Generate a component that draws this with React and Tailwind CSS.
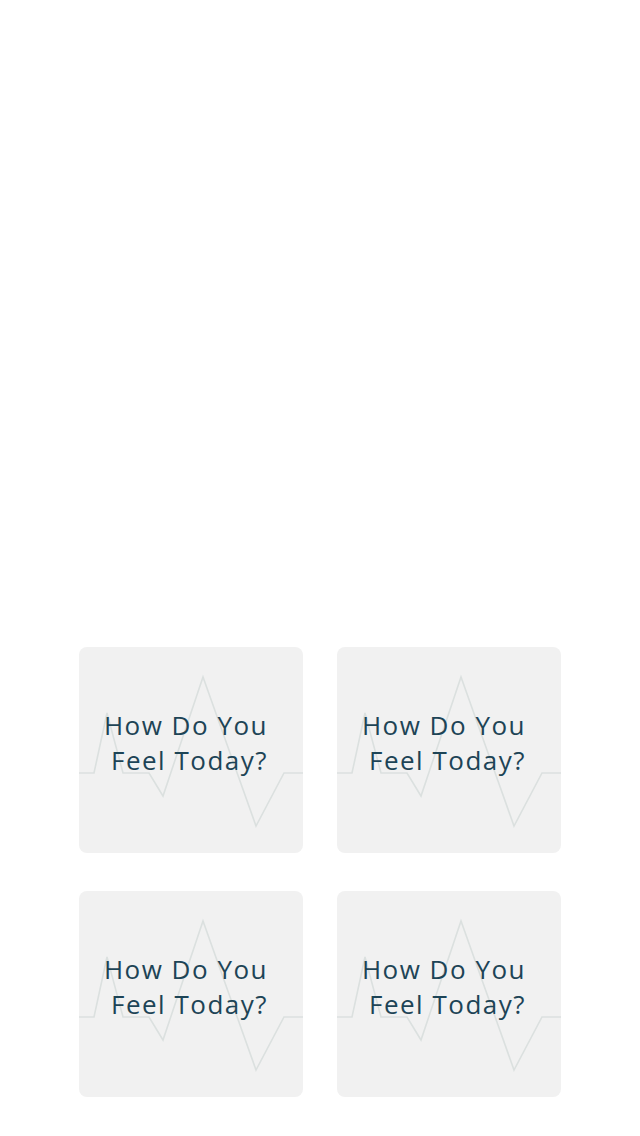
const cards = [1, 2, 3, 4]

function Pulse() {
  return (
    <svg
      className="absolute inset-0 h-full w-full"
      viewBox="0 0 224 206"
      preserveAspectRatio="none"
      fill="none"
    >
      <polyline
        points="0,126 15,126 28,66 44,126 70,126 84,149 124,30 177,179 205,126 224,126"
        stroke="#dbe0df"
        strokeWidth="1.6"
        strokeLinejoin="miter"
      />
    </svg>
  )
}

function MoodCard() {
  return (
    <div className="relative h-[206px] w-[224px] overflow-hidden rounded-lg bg-[#f1f1f1]">
      <Pulse />
      <div className="relative pt-[61px] pr-[35px] text-right text-[26px] leading-[35px] tracking-[1.5px] text-[#1d4456] font-['Open_Sans',sans-serif]">
        How Do You
        <br />
        Feel Today?
      </div>
    </div>
  )
}

export default function App() {
  return (
    <div className="flex h-[1136px] flex-col justify-end bg-white pb-[39px]">
      <div className="mx-auto grid grid-cols-[224px_224px] gap-x-[34px] gap-y-[38px]">
        {cards.map((c) => (
          <MoodCard key={c} />
        ))}
      </div>
    </div>
  )
}
